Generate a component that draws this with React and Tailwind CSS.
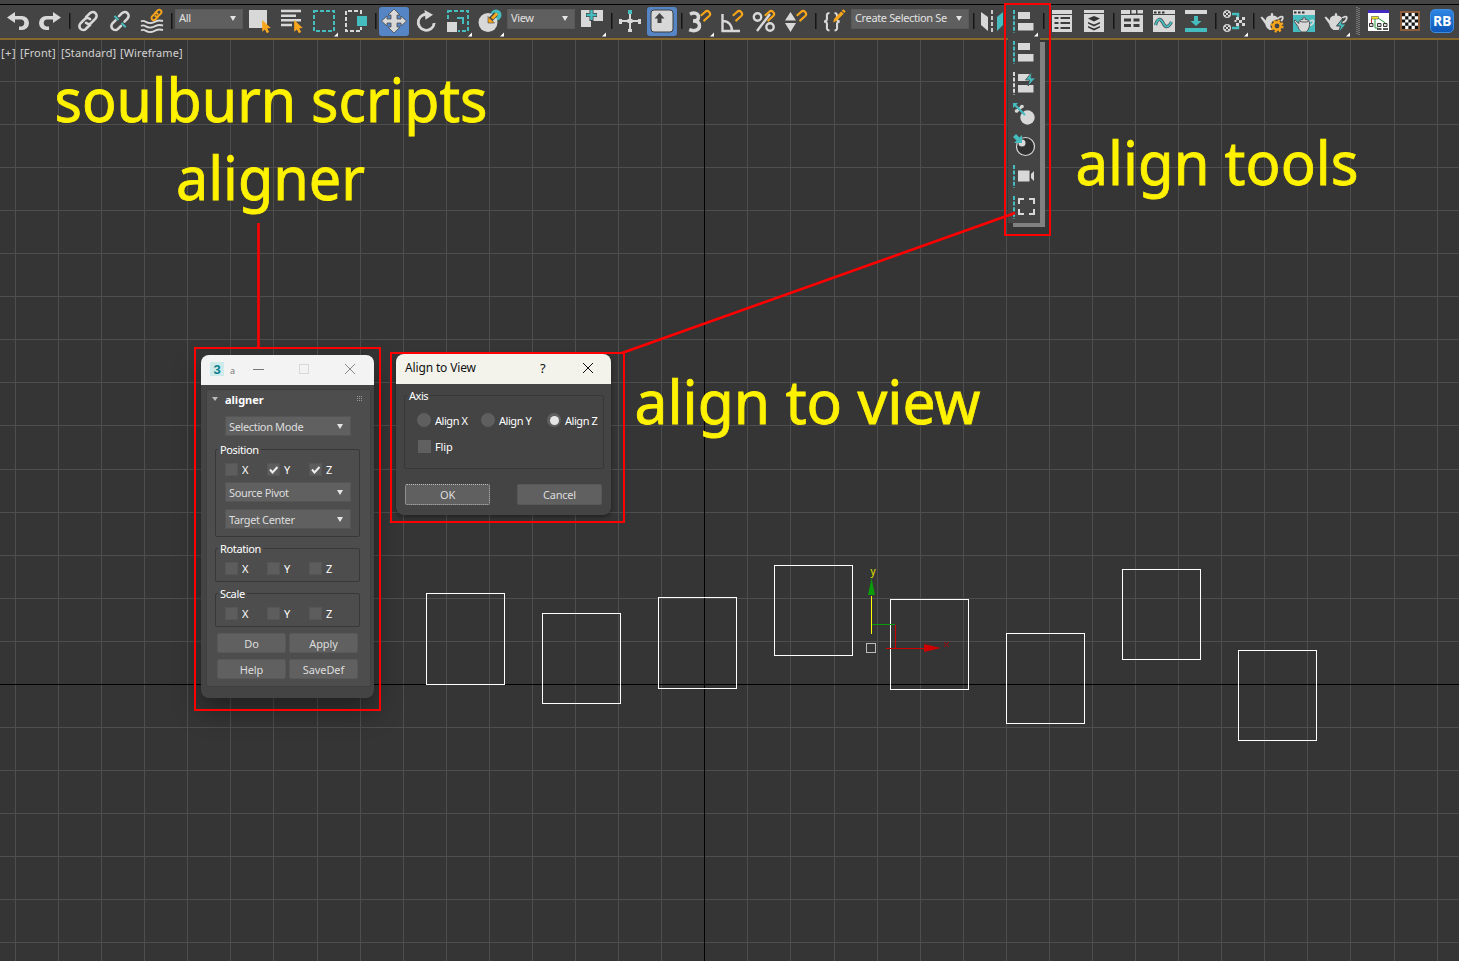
import React from "react";

const G = "#d8d8d8";
const T = "#45bdbf";
const O = "#f9a61a";

function Icon({ children, corner }) {
  return (
    <svg width="24" height="24" viewBox="0 0 24 24" fill="none" className="shrink-0 overflow-visible">
      {children}
      {corner && <path d="M26 23.5v4h-4z" fill="#fff" />}
    </svg>
  );
}

function Sep() {
  return <div className="ml-[7px] mr-[5px] h-4 w-px shrink-0 border-r border-r-[#2c2c2c] bg-[#161616] box-content" />;
}

function Group({ children }) {
  return <div className="flex shrink-0 gap-2">{children}</div>;
}

function Caret() {
  return (
    <svg width="6" height="5" viewBox="0 0 6 5" className="shrink-0">
      <path d="M0 0h6L3 5z" fill="#e4e4e4" />
    </svg>
  );
}

function BarSelect({ label, className }) {
  return (
    <div className={"mb-[5px] flex h-5 shrink-0 items-center justify-between border border-[#595959] bg-[#5f5f5f] pl-[3px] pr-[6px] text-[11px] tracking-[-0.36px] text-[#e2e2e2] " + className}>
      <span className="whitespace-nowrap">{label}</span>
      <Caret />
    </div>
  );
}

const LinkShape = () => (
  <g stroke={G} strokeWidth="2.6" strokeLinecap="round">
    <path d="M10 8.2l4-4a3.8 3.8 0 0 1 5.5 5.4l-4.2 4.2a3.8 3.8 0 0 1-5.3 0" />
    <path d="M14.2 15.8l-4.2 4a3.8 3.8 0 0 1-5.5-5.4l4.2-4.2a3.8 3.8 0 0 1 5.4 0" />
  </g>
);

const Magnet = () => (
  <path d="M12.800 6.800l4.200-3.800a2.900 2.900 0 0 1 4.200 4.100l-5.700 5" stroke={O} strokeWidth="2.100" />
);

const Cursor = () => (
  <path d="M14.2 11l8.6 8-3.6.3 2 3.8-2.4 1.1-1.9-3.8-2.7 2.4z" fill={O} />
);

const AlignBars = () => (
  <>
    <path d="M2 1v23" stroke={T} strokeWidth="2" strokeDasharray="4 1.6" />
    <path d="M6 3h12v7H6zM6 14h15.500v7.500H6z" fill={G} />
  </>
);

const Teapot = ({ stroke }) => (
  <g stroke={stroke}>
    <path d="M18 9.500c2-2 5-2.500 4.800-.8-.2 2-2 4.300-4.800 5.300" stroke={G} strokeWidth="1.800" />
    <path
      d="M6 9.500c.8-2 3-2.800 5-3C10.500 5 11 4 12 4s1.500 1 1 2.500c2.200.2 4.200 1 5 3 1 4-.3 8.500-3.500 11.500h-5c-2.500-1.500-3.800-3.500-4.300-6L.5 8.500l1.500-1 4 4z"
      fill={G}
    />
    {stroke && <path d="M7.500 9c3 1 6.500 1 9.500 0" />}
  </g>
);

const Ball = ({ y }) => (
  <g transform={`translate(1 ${y})`}>
    <circle cx="4" cy="4" r="3.400" stroke={G} strokeWidth="1.300" />
    <path d="M3 3h2v2H3zM1 1.500h2V3H1zM5 1.500h2V3H5zM1 5h2v1.500H1zM5 5h2v1.500H5z" fill={G} />
  </g>
);

function Toolbar() {
  return (
    <header className="w-full overflow-hidden border-b-2 border-b-[#86672c] bg-[#444]">
      <div className="h-[5px] border-b border-b-black" />
      <div className="flex h-[33px] items-center">
        <div className="flex items-center pb-[1px] pl-[7px]">
          <div className="flex shrink-0 gap-[7px]">
            <Icon>
              <path d="M0 8.500L8 3v4h7a7 7 0 0 1 0 14h-3v-3.500h2.500a3.600 3.600 0 0 0 0-7H8v3.500z" fill={G} />
            </Icon>
            <Icon>
              <path d="M23 8.500L15 3v4H8a7 7 0 0 0 0 14h3v-3.500H8.500a3.600 3.600 0 0 1 0-7H15v3.500z" fill={G} />
            </Icon>
          </div>
          <Sep />
          <Group>
            <Icon><LinkShape /></Icon>
            <Icon>
              <g stroke={G} strokeWidth="2.600" strokeLinecap="round">
                <path d="M11 7.200l3-3a3.800 3.800 0 0 1 5.500 5.400l-3 3" />
                <path d="M13 16.800l-3 3a3.800 3.800 0 0 1-5.500-5.400l3-3" />
              </g>
              <path d="M6.500 7l4 4M13.500 14l4.200 4.200" stroke={T} strokeWidth="2" />
            </Icon>
            <Icon>
              <g stroke={G} strokeWidth="1.900">
                <path d="M1 12.500c4-2.500 5 2.500 10 1.500s6-4 12-2" />
                <path d="M1 17c4-2.500 5 2.500 10 1.500s6-4 12-2" />
                <path d="M1 21.500c4-2.500 5 2.500 10 1.500s6-4 12-2" />
              </g>
              <g transform="translate(9.500 -1) scale(.58)" stroke={O} strokeWidth="3.200" strokeLinecap="round">
                <path d="M10 8.200l4-4a3.800 3.800 0 0 1 5.500 5.400l-4.200 4.200a3.800 3.800 0 0 1-5.300 0" />
                <path d="M14.200 15.800l-4.200 4a3.800 3.800 0 0 1-5.500-5.400l4.200-4.200a3.800 3.800 0 0 1 5.400 0" />
              </g>
            </Icon>
          </Group>
          <Sep />
          <BarSelect label="All" className="-ml-[3px] mr-[5px] w-[68px]" />
          <Group>
            <Icon><path d="M1 1h18v18H1z" fill={G} /><Cursor /></Icon>
            <Icon>
              <path d="M1 2h20M1 6.700h15M1 11.300h20M1 16h11" stroke={G} strokeWidth="2.400" />
              <Cursor />
            </Icon>
            <Icon corner><rect x="2" y="2" width="20" height="20" stroke={T} strokeWidth="2" strokeDasharray="4 2" /></Icon>
            <Icon>
              <path d="M17 5V2H2v20h15v-4" stroke={G} strokeWidth="2" strokeDasharray="4 2" />
              <path d="M13 7h10v10H13z" fill={T} />
            </Icon>
          </Group>
          <Sep />
          <div className="-ml-[3px] mr-[5px] flex h-[29px] w-[30px] shrink-0 items-center justify-center rounded-[3px] bg-[#5585c5]">
            <Icon>
              <path d="M12 0l6 6h-3v4h4V7l5.500 5-5.500 5v-3h-4v4h3l-6 6-6-6h3v-4H5v3L-.5 12 5 7v3h4V6H6z" fill={G} stroke="#494949" strokeWidth=".8" />
            </Icon>
          </div>
          <Group>
            <Icon>
              <path d="M15 5.800A8 8 0 1 0 20.200 14" stroke={G} strokeWidth="2.800" />
              <path d="M10.500 1l8.500 4.800-7.500 5z" fill={G} />
            </Icon>
            <Icon corner>
              <rect x="2" y="2" width="20" height="20" stroke={T} strokeWidth="2" strokeDasharray="4 2" />
              <path d="M0 11h12v13H0z" fill="#444" />
              <path d="M1 13h10v10H1z" fill={G} />
              <path d="M11 9h6v6" stroke={T} strokeWidth="2" />
            </Icon>
            <Icon corner>
              <circle cx="18" cy="6" r="5.500" fill={T} />
              <circle cx="10" cy="13.500" r="9.500" fill={G} />
              <path d="M18 5l-6 6" stroke="#444" strokeWidth="5" />
              <path d="M19 4.500l-5 5" stroke={O} strokeWidth="3" />
              <path d="M10 7.500l6.500 6.500H10z" fill={O} stroke="#444" strokeWidth=".6" />
            </Icon>
          </Group>
          <BarSelect label="View" className="mx-[5px] w-[68px]" />
          <Icon corner>
            <path d="M1 1h10v17H1zM12 1h11v11H12z" fill={G} />
            <path d="M11.500 0v12M6 6h11" stroke="#444" strokeWidth="4" />
            <path d="M11.500 1v10M6.500 6h10" stroke={T} strokeWidth="2.500" />
          </Icon>
          <Sep />
          <Icon>
            <path d="M12 5v18M1 12h22" stroke={G} strokeWidth="2" />
            <path d="M10 1h4v4h-4z" fill={T} />
            <path d="M1 10h3v5H1zM20 10h3v5h-3zM10 20h4v3h-4zM9.500 10h5v4h-5z" fill={G} />
          </Icon>
          <div className="ml-[5px] flex h-[29px] w-[30px] shrink-0 items-center justify-center rounded-[3px] bg-[#5585c5]">
            <Icon>
              <rect x="1" y="1" width="22" height="22" rx="3" fill={G} stroke="#3c3c3c" />
              <path d="M9.500 4l5 5.500h-3V14h-4V9.500h-3z" fill="#444" />
            </Icon>
          </div>
          <div className="-ml-[3px] shrink-0"><Sep /></div>
          <Group>
            <Icon corner>
              <path d="M2 5.200C6 3.200 10.500 4 10.500 8c0 2.600-2 4-5.500 4 4 0 6.500 1.600 6.500 4.800 0 5-6 5.700-10.300 3.900" stroke={G} strokeWidth="3.500" />
              <Magnet />
            </Icon>
            <Icon>
              <path d="M2.500 5v17H20M2.500 12c6 0 9.500 4 9.500 10" stroke={G} strokeWidth="2.400" />
              <Magnet />
            </Icon>
            <Icon>
              <circle cx="5.500" cy="8" r="3.700" stroke={G} strokeWidth="2.400" />
              <circle cx="18" cy="18" r="3.700" stroke={G} strokeWidth="2.400" />
              <path d="M5 22L18 5" stroke={G} strokeWidth="2.400" />
              <Magnet />
            </Icon>
            <Icon>
              <path d="M6.500 3l5.500 8.500H1zM1 14h11l-5.500 9z" fill={G} />
              <Magnet />
            </Icon>
          </Group>
          <Sep />
          <Icon>
            <path d="M7.500 4C4 4 5 7 5 9.500c0 2-1 3-3 3 2 0 3 1 3 3 0 3-1 6 2.500 6M12.500 21.500c3.500 0 2.500-3 2.500-6 0-2 .8-3 2.800-3-2 0-2.800-1-2.800-3 0-2.500.5-5.500-2.500-5.500" stroke={G} strokeWidth="2.100" />
            <path d="M11 13.500l1.200-3.800 7-7.200 2.500 2.300-7 7z" fill={O} />
            <path d="M19.800 1.800l1.500-1.500 2.300 2-1.400 1.700z" fill={O} />
          </Icon>
          <BarSelect label="Create Selection Se" className="ml-[5px] w-[118px]" />
          <div className="-ml-[3px] shrink-0"><Sep /></div>
          <Group>
            <Icon>
              <path d="M1 3l7 5v14l-7-6z" fill={G} />
              <path d="M12 1v23" stroke={G} strokeWidth="1.800" strokeDasharray="4 2" />
              <path d="M23 3l-6 5v14l6-6z" fill={T} />
            </Icon>
            <Icon corner><AlignBars /></Icon>
          </Group>
          <Sep />
          <Group>
            <Icon>
              <path d="M2 1h20v22H2z" fill={G} />
              <path d="M2 5.500h20" stroke="#444" />
              <path d="M4.500 9h4M10.500 9H20M4.500 14h4M10.500 14H20M4.500 19h4M10.500 19H20" stroke="#3c3c3c" strokeWidth="2.200" />
            </Icon>
            <Icon>
              <path d="M2 1h20v22H2z" fill={G} />
              <path d="M2 4.500h20" stroke="#444" />
              <path d="M6 9.500l6-2.500 6 2.500-6 3zM6 13l6 2.500 6-2.500v1.500l-6 3-6-3zM6 17l6 2.500 6-2.500v1.500l-6 3-6-3z" fill="#333" />
            </Icon>
          </Group>
          <Sep />
          <Group>
            <Icon>
              <path d="M1 1h9v4h13v18H1z" fill={G} />
              <path d="M11.500 1h4.500v3.500h-4.500zM17.500 1H23v3.500h-5.500z" fill={G} />
              <path d="M1 5.500h22" stroke="#444" />
              <path d="M4 11h7M13.500 11h6M4 16.500h7M13.500 16.500h6" stroke="#3c3c3c" strokeWidth="2.800" />
            </Icon>
            <Icon>
              <path d="M1 1h22v22H1z" fill={G} />
              <path d="M2 2.500h2.500v2H2zM6 2.500h2.500v2H6zM10 2.500h2.500v2H10z" fill="#333" />
              <path d="M1 5.500h22" stroke="#444" />
              <path d="M3.500 16c2-7 5-7 7.500-2s5 5 8.500-1" stroke="#444" strokeWidth="3.200" />
              <path d="M3.500 16c2-7 5-7 7.500-2s5 5 8.500-1" stroke={T} strokeWidth="1.800" />
            </Icon>
            <Icon>
              <path d="M1 1h22v4H1z" fill={G} />
              <path d="M1 19h22v4H1z" fill={T} />
              <path d="M10 7h4v5h3.500L12 17l-5.500-5H10z" fill={T} />
            </Icon>
          </Group>
          <Sep />
          <Icon corner>
            <Ball y={1} />
            <Ball y={15} />
            <path d="M14 8h3v3h-3zM20 8h3v3h-3zM17 11h3v3h-3zM12.500 11h2v2h-2zM14 14h3v3h-3zM20 14h3v3h-3z" fill={G} />
            <path d="M10 5h6v3M10 19h6v-2" stroke={T} strokeWidth="2.400" />
          </Icon>
          <Sep />
          <Group>
            <Icon>
              <Teapot />
              <circle cx="17" cy="17" r="6.500" fill="#444" />
              <circle cx="17" cy="17" r="3.700" stroke={O} strokeWidth="2.600" />
              <circle cx="17" cy="17" r="5.600" stroke={O} strokeWidth="2" strokeDasharray="2.200 2.200" />
            </Icon>
            <Icon>
              <path d="M1 1h22v22H1z" fill={T} />
              <path d="M1 1h22v5H1z" fill={G} />
              <path d="M2 2.500h2.500v2H2zM6 2.500h2.500v2H6zM10 2.500h2.500v2H10z" fill="#333" />
              <g transform="translate(1.500 4.500) scale(.88)"><Teapot stroke="#444" /></g>
            </Icon>
            <Icon corner>
              <Teapot />
              <path d="M19 9l-6.500 8h4l-2 7 7.500-9h-4.500z" fill={T} stroke="#444" strokeWidth="1" />
            </Icon>
          </Group>
          <svg width="4" height="28" className="ml-[8px] mr-[6px] shrink-0">
            <path d="M1 0v28M3 1v27" stroke="#aaa" strokeWidth="1" strokeDasharray="1 1" />
          </svg>
          <Group>
            <Icon>
              <path d="M2 1h21v21H2z" fill="#fff" />
              <path d="M2 1h21v3H2z" fill="#432ac0" />
              <path d="M12 9l7.500 5M9 10v9h3" stroke="#279a3b" />
              <path d="M5.500 14V10H6" stroke="#b33" />
              <path d="M5.500 7.500h7v2.500h-7z" fill="#f4e620" stroke="#665" strokeWidth=".7" />
              <path d="M3.500 14.500h3.500v3H3.500zM11.500 14.500h3.500v3h-3.500zM17.500 14.500h3.500v3h-3.500z" fill="#ddd" stroke="#222" strokeWidth=".9" />
              <path d="M11 20h4.500M17 20h5" stroke="#222" strokeWidth="1.400" />
            </Icon>
            <Icon>
              <path d="M3 3h18v18H3z" fill="#fff" stroke="#8d5f3c" strokeWidth="2" />
              <path d="M4 4h16v16H4z" fill="#fff" />
              <path d="M4 4h3.200v3.200H4zM10.400 4h3.200v3.200h-3.200zM16.800 4H20v3.200h-3.200zM7.200 7.200h3.200v3.200H7.200zM13.600 7.200h3.200v3.200h-3.200zM4 10.400h3.200v3.200H4zM10.400 10.400h3.200v3.200h-3.200zM16.800 10.400H20v3.200h-3.200zM7.200 13.600h3.200v3.200H7.200zM13.600 13.600h3.200v3.200h-3.200zM4 16.800h3.200V20H4zM10.400 16.800h3.200V20h-3.200zM16.800 16.800H20V20h-3.200z" fill="#111" />
            </Icon>
            <div className="flex h-6 w-6 shrink-0 items-center justify-center rounded-[5px] border border-[#3d8de0] bg-linear-to-b from-[#2f86e4] to-[#0d57b8] font-['Open_Sans',sans-serif] text-[14px] font-bold leading-none tracking-[-0.3px] text-white">
              RB
            </div>
          </Group>
        </div>
      </div>
    </header>
  );
}

const STEP = 43.08;
const columns = Array.from({ length: 34 }, (_, i) => Math.round(15 + i * STEP));
const rows = Array.from({ length: 21 }, (_, i) => Math.round(683.9 + (i - 14) * STEP));
const boxes = [
  [426, 593, 91],
  [542, 613, 90],
  [658, 597, 91],
  [774, 565, 90],
  [890, 599, 90],
  [1006, 633, 90],
  [1122, 569, 90],
  [1238, 650, 90],
];

function Viewport() {
  return (
    <svg width="1459" height="961" viewBox="0 0 1459 961" className="absolute left-0 top-0" fill="none">
      <g shapeRendering="crispEdges">
        {columns.map((x) => (
          <path key={x} d={`M${x + 0.5} 40V961`} stroke={x === 704 ? "#000" : "#4e4e4e"} />
        ))}
        {rows.map((y) => (
          <path key={y} d={`M0 ${y + 0.5}H1459`} stroke={y === 684 ? "#000" : "#4e4e4e"} />
        ))}
        <path d="M704.5 40V961" stroke="#000" />
        {boxes.map(([x, y, h]) => (
          <rect key={x} x={x + 0.5} y={y + 0.5} width="78" height={h} stroke="#fff" />
        ))}
        <path d="M871.500 596v38" stroke="#ff0" />
        <path d="M872 624.500h23" stroke="#0a9a0a" />
        <path d="M895.500 625v23" stroke="#c00" />
        <path d="M886 648.500h39" stroke="#c00" />
        <rect x="866.500" y="643.500" width="9" height="9" stroke="#bbb" />
      </g>
      <path d="M871.500 578l3.500 17h-7z" fill="#0a9a0a" />
      <path d="M941 648l-17-4v8z" fill="#c00" />
      <path d="M944 642l5 5M949 642l-5 5" stroke="#a00" />
      <text x="870.500" y="575" fill="#e5e500" fontSize="10" fontFamily="Noto Sans, sans-serif">y</text>
    </svg>
  );
}

function Drop({ label }) {
  return (
    <div className="flex h-5 w-[126px] items-center justify-between border border-[#555] bg-[#606060] pl-[3px] pr-[7px] text-[#ddd]">
      <span>{label}</span>
      <Caret />
    </div>
  );
}

function Check({ label, on }) {
  return (
    <div className="flex w-[42px] items-center gap-1">
      <span className="flex h-[13px] w-[13px] items-center justify-center border border-[#565656] bg-[#5d5d5d]">
        {on && (
          <svg width="9" height="8" viewBox="0 0 9 8" fill="none">
            <path d="M1 3.500l2.500 3L8.500 1" stroke="#eee" strokeWidth="2" />
          </svg>
        )}
      </span>
      <span className="text-white">{label}</span>
    </div>
  );
}

function Axes({ checked = [] }) {
  return (
    <div className="flex h-[13px] items-center">
      {["X", "Y", "Z"].map((a) => (
        <Check key={a} label={a} on={checked.includes(a)} />
      ))}
    </div>
  );
}

function Box({ title, bg, className, children }) {
  return (
    <div className={"rounded-[2px] border border-[#383838] " + className}>
      <div className="-mt-[7px] flex h-[14px] items-center">
        <span className={"ml-[2px] px-[2px] leading-[14px] text-white " + bg}>{title}</span>
      </div>
      {children}
    </div>
  );
}

function Button({ children, className = "" }) {
  return (
    <button className={"flex items-center justify-center rounded-[2px] border border-[#585858] bg-[#606060] text-[#ddd] " + className}>
      {children}
    </button>
  );
}

function AlignerWindow() {
  return (
    <section className="absolute left-[201px] top-[355px] h-[343px] w-[173px] overflow-hidden rounded-lg bg-[#444] text-[11px] leading-none tracking-[-0.36px] shadow-[0_12px_28px_rgba(0,0,0,0.4)]">
      <div className="flex h-[30px] items-center bg-[#f3f3f3] pb-[2px]">
        <span className="ml-[9px] flex h-[14px] w-[14px] items-center justify-center bg-[#cfeaea] font-['Liberation_Sans',sans-serif] text-[13px] font-bold text-[#087f8c]">3</span>
        <span className="ml-[6px] mt-[2px] w-[6px] text-[9px] text-[#777]">a</span>
        <svg width="104" height="12" viewBox="0 0 104 12" fill="none" className="ml-[16px]">
          <path d="M1 6.500h11" stroke="#777" />
          <rect x="47.500" y="1.500" width="9" height="9" stroke="#d8d8d8" />
          <path d="M93 1l10 10M103 1L93 11" stroke="#888" />
        </svg>
      </div>
      <div className="ml-[5px] mr-[3px] mt-[4px] h-[298px] rounded-[2px] border border-[#404040] bg-[#4d4d4d] pl-[8px]">
        <div className="flex h-[18px] items-center">
          <svg width="6" height="4" viewBox="0 0 6 4" className="-ml-[3px] mb-[1px]"><path d="M0 0h6L3 4z" fill="#bbb" /></svg>
          <span className="ml-[7px] flex-1 font-bold tracking-normal text-white">aligner</span>
          <svg width="6" height="6" viewBox="0 0 6 6" className="mb-[1px] mr-[7px]"><path d="M0 .5h6M0 2.500h6M0 4.500h6" stroke="#999" strokeDasharray="1 1" /></svg>
        </div>
        <div className="ml-[10px] mt-[8px]"><Drop label="Selection Mode" /></div>
        <Box title="Position" bg="bg-[#4d4d4d]" className="mt-[13px] h-[88px] w-[145px]">
          <div className="ml-[9px] mt-[6px] flex flex-col">
            <Axes checked={["Y", "Z"]} />
            <div className="mt-[6px] flex flex-col gap-[7px]">
              <Drop label="Source Pivot" />
              <Drop label="Target Center" />
            </div>
          </div>
        </Box>
        <Box title="Rotation" bg="bg-[#4d4d4d]" className="mt-[11px] h-[34px] w-[145px]">
          <div className="ml-[9px] mt-[6px]"><Axes /></div>
        </Box>
        <Box title="Scale" bg="bg-[#4d4d4d]" className="mt-[11px] h-[34px] w-[145px]">
          <div className="ml-[9px] mt-[6px]"><Axes /></div>
        </Box>
        <div className="ml-[2px] mt-[6px] grid w-[141px] grid-cols-2 gap-x-[3px] gap-y-[6px] tracking-[-0.1px]">
          <Button className="h-5">Do</Button>
          <Button className="h-5">Apply</Button>
          <Button className="h-5">Help</Button>
          <Button className="h-5">SaveDef</Button>
        </div>
      </div>
    </section>
  );
}

function Radio({ label, on, className }) {
  return (
    <div className={"flex items-center gap-1 " + className}>
      <span className="flex h-[14px] w-[14px] shrink-0 items-center justify-center rounded-full bg-[#5f5f5f]">
        {on && <span className="h-[9px] w-[9px] rounded-full bg-[#e6e6e6]" />}
      </span>
      <span className="whitespace-nowrap text-white">{label}</span>
    </div>
  );
}

function AlignToViewDialog() {
  return (
    <section className="absolute left-[396px] top-[354px] h-[161px] w-[215px] overflow-hidden rounded-lg bg-[#444] text-[11px] leading-none tracking-[-0.45px] shadow-[0_2px_5px_rgba(0,0,0,0.4)]">
      <div className="flex h-[30px] items-center bg-[#f3f3ec] pb-[2px] pl-[9px] text-[#111]">
        <span className="w-[135px] text-[12px] tracking-[-0.15px]">Align to View</span>
        <span className="w-[43px] text-[13px]">?</span>
        <svg width="10" height="10" viewBox="0 0 10 10"><path d="M0 0l10 10M10 0L0 10" stroke="#111" /></svg>
      </div>
      <Box title="Axis" bg="bg-[#444]" className="ml-[8px] mt-[11px] h-[74px] w-[200px]">
        <div className="ml-[12px] mt-[10px] flex">
          <Radio label="Align X" className="w-[64px]" />
          <Radio label="Align Y" className="w-[66px]" />
          <Radio label="Align Z" on className="w-[54px]" />
        </div>
        <div className="ml-[13px] mt-[13px] flex items-center gap-1">
          <span className="h-[13px] w-[13px] bg-[#606060]" />
          <span className="tracking-[-0.1px] text-white">Flip</span>
        </div>
      </Box>
      <div className="ml-[9px] mt-[15px] flex gap-[27px] tracking-[-0.2px]">
        <button className="flex h-[21px] w-[85px] items-center justify-center rounded-[2px] border border-dotted border-[#bbb] bg-[#606060] text-[#ddd]">OK</button>
        <Button className="h-[21px] w-[85px]">Cancel</Button>
      </div>
    </section>
  );
}

function AlignFlyout() {
  return (
    <div className="absolute left-[1008px] top-[37px] flex h-[190px] w-[37px]">
      <div className="absolute bottom-0 left-[5px] right-0 top-[5px] bg-[#818181]" />
      <div className="relative flex h-[186px] w-8 flex-col gap-[7px] bg-[#444] pl-1 pt-[3px]">
        <Icon><AlignBars /></Icon>
        <Icon>
          <path d="M2 1v23" stroke={G} strokeWidth="2" strokeDasharray="4 1.600" />
          <path d="M6 3h12v7H6zM6 14h15.500v7.500H6z" fill={G} />
          <path d="M20 1l-6.500 8h4l-1.500 6 7.500-8H19z" fill={T} stroke="#444" strokeWidth=".8" />
        </Icon>
        <Icon>
          <circle cx="15.500" cy="15.500" r="7.200" fill={G} />
          <path d="M4.500 9.500l6-5.500" stroke={G} strokeWidth="2.500" />
          <circle cx="4.500" cy="9" r="1.800" fill={G} />
          <circle cx="10" cy="4.500" r="1.800" fill={G} />
          <path d="M2.500 2.500l10.500 10.500" stroke={T} strokeWidth="2.200" />
          <path d="M1 1h5L1 6z" fill={T} />
        </Icon>
        <Icon>
          <circle cx="13.500" cy="13.500" r="9" fill="#303030" stroke={G} strokeWidth="1.200" />
          <circle cx="10" cy="10" r="3.500" fill={G} />
          <path d="M1 4l3-3 3.500 3.500L10 2v8H2l2.500-2.500z" fill={T} />
        </Icon>
        <Icon>
          <path d="M2 1v23" stroke={T} strokeWidth="2" strokeDasharray="4 1.600" />
          <path d="M6 6.500h11.500v11H6zM19 10l3-3v10l-3-3z" fill={G} />
        </Icon>
        <Icon>
          <path d="M2 1v23" stroke={T} strokeWidth="2" strokeDasharray="4 1.600" />
          <path d="M7 9V4h5M17 4h5v5M22 14v5h-5M12 19H7v-5" stroke={G} strokeWidth="2" />
        </Icon>
      </div>
    </div>
  );
}

function Annotations() {
  return (
    <svg width="1459" height="961" viewBox="0 0 1459 961" className="absolute left-0 top-0" fill="none">
      <g stroke="#f00" strokeWidth="2">
        <rect x="195" y="348" width="185" height="362" />
        <rect x="391" y="353" width="233" height="169" />
        <rect x="1005" y="4" width="45" height="231" />
        <path d="M258.500 223v125M1015 213L622 353" strokeWidth="2.600" />
      </g>
      <g fill="#fff200" stroke="#fff200" strokeWidth="0.800" fontFamily="Noto Sans, sans-serif" fontSize="59.500">
        <text x="54.500" y="122" textLength="433" lengthAdjust="spacingAndGlyphs">soulburn scripts</text>
        <text x="176" y="200" textLength="189" lengthAdjust="spacingAndGlyphs">aligner</text>
        <text x="1075.500" y="184.500" textLength="283" lengthAdjust="spacingAndGlyphs">align tools</text>
        <text x="634.500" y="424" textLength="346" lengthAdjust="spacingAndGlyphs">align to view</text>
      </g>
    </svg>
  );
}

export default function App() {
  return (
    <main className="relative h-[961px] w-[1459px] overflow-hidden bg-[#353535] font-['Noto_Sans',sans-serif]">
      <Viewport />
      <div className="relative">
        <Toolbar />
        <div className="mt-[6px] flex gap-[3px] whitespace-nowrap pl-px text-[11px] leading-[13px] text-[#d2d2d2]">
          <span className="w-[16px] tracking-[0.5px]">[+]</span>
          <span className="w-[38px] tracking-[0.15px]">[Front]</span>
          <span className="w-[56px] tracking-[0.1px]">[Standard]</span>
          <span className="tracking-[0.1px]">[Wireframe]</span>
        </div>
      </div>
      <AlignerWindow />
      <AlignToViewDialog />
      <AlignFlyout />
      <Annotations />
    </main>
  );
}
